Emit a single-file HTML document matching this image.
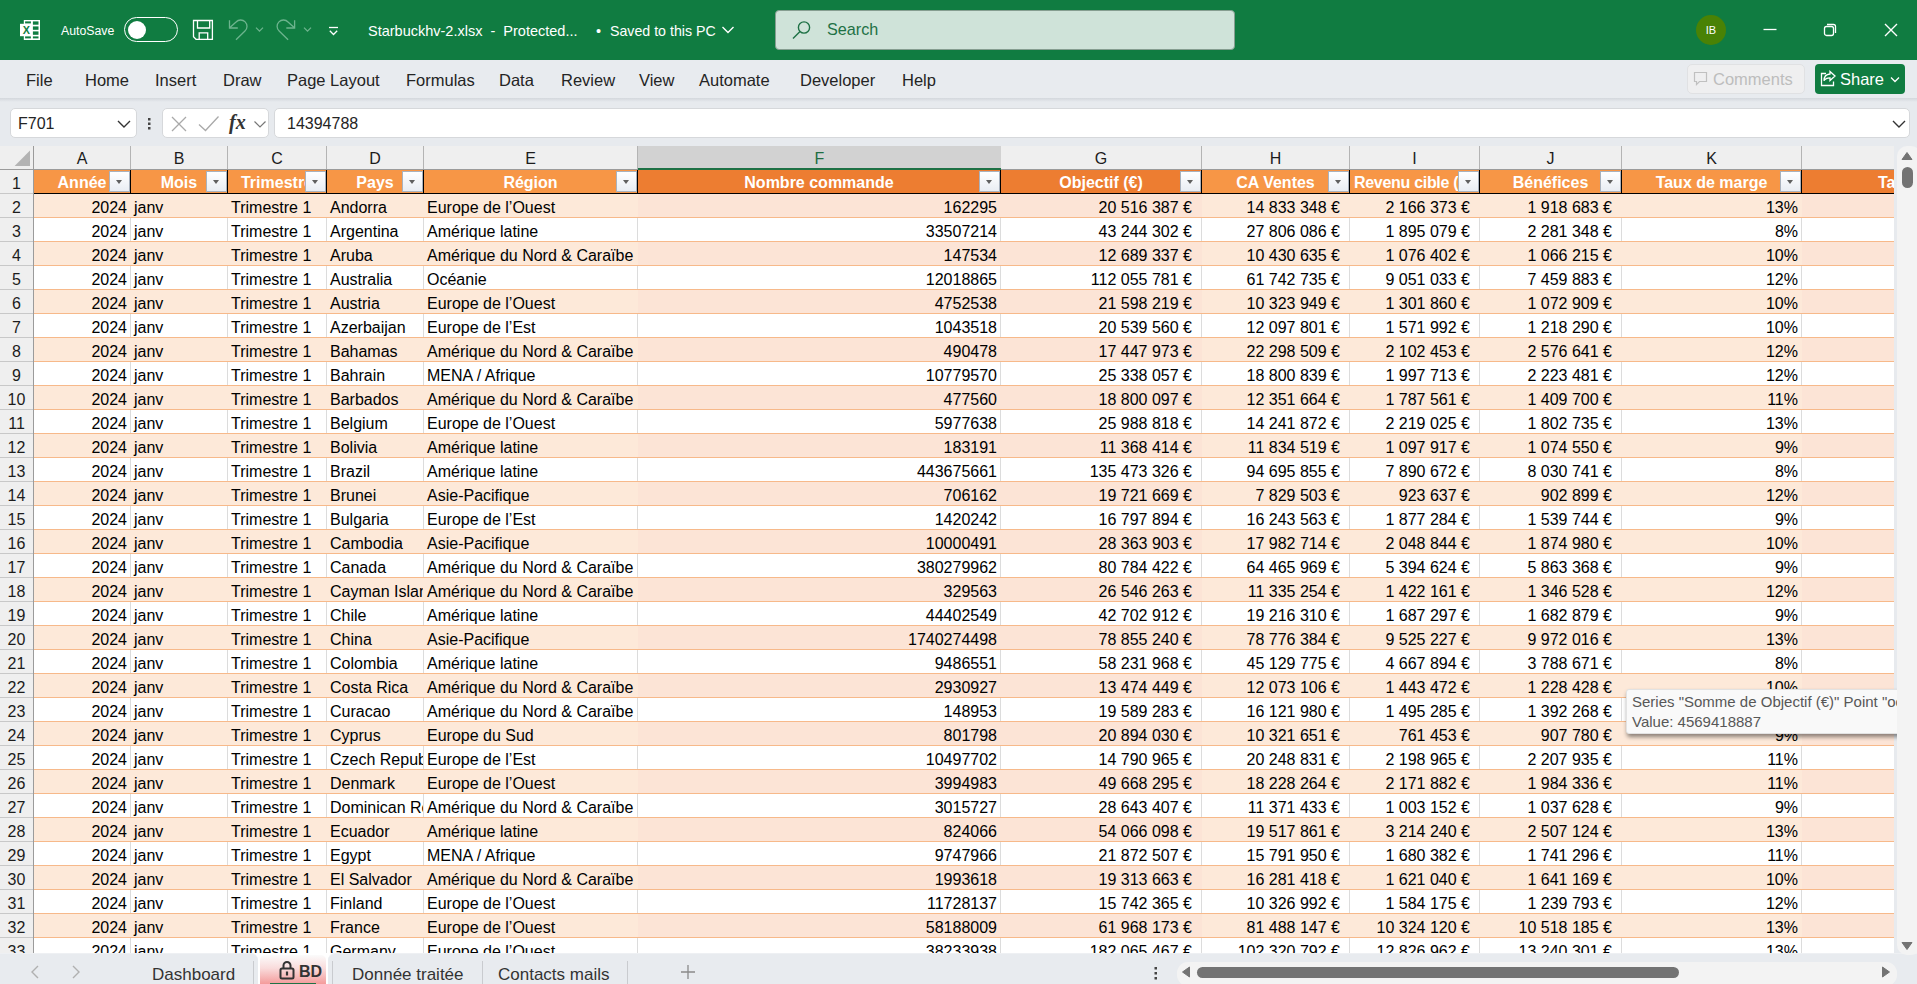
<!DOCTYPE html>
<html lang="fr"><head><meta charset="utf-8"><title>Starbuckhv-2.xlsx - Excel</title>
<style>
*{box-sizing:border-box;margin:0;padding:0}
html,body{width:1917px;height:984px;overflow:hidden}
body{position:relative;background:#E7EAEE;font-family:"Liberation Sans",sans-serif;color:#242424}
.abs{position:absolute}
/* ---------- title bar ---------- */
#title{position:absolute;left:0;top:0;width:1917px;height:60px;background:#107C41;color:#fff}
#title .t{position:absolute;white-space:nowrap;font-size:14.5px;line-height:20px;top:20.5px}
#toggle{position:absolute;left:124px;top:17px;width:54px;height:25px;border:1px solid #fff;border-radius:13px}
#toggle i{position:absolute;left:3px;top:3px;width:18px;height:18px;border-radius:9px;background:#fff}
#search{position:absolute;left:775px;top:10px;width:460px;height:40px;background:#CFE3D9;border:1px solid #869E91;border-radius:4px}
#search span{position:absolute;left:51px;top:7px;font-size:16.2px;line-height:22px;color:#1E7145}
#avatar{position:absolute;left:1696px;top:15px;width:30px;height:30px;border-radius:15px;background:#498205;color:#fff;font-size:11px;line-height:30px;text-align:center}
/* ---------- ribbon tabs ---------- */
#tabs{position:absolute;left:0;top:60px;width:1917px;height:38px;background:#E8EBEF}
#tabs .m{position:absolute;top:9px;font-size:16.5px;line-height:22px;white-space:nowrap;color:#242424}
#tabshadow{position:absolute;left:0;top:98px;width:1917px;height:4px;background:linear-gradient(#D3D7DC,#E7EAEE)}
#comments{position:absolute;left:1687px;top:64px;width:118px;height:30px;border:1px solid #E0E1E3;border-radius:5px;background:#EFEFF0;color:#BDBDBD;font-size:16.5px;line-height:28px}
#share{position:absolute;left:1815px;top:64px;width:90px;height:30px;border-radius:4px;background:#107C41;color:#fff;font-size:16.5px;line-height:30px}
/* ---------- formula bar ---------- */
.box{position:absolute;top:108px;height:30px;background:#fff;border:1px solid #D6D8DB;border-radius:5px}
/* ---------- grid ---------- */
#colhdr{position:absolute;left:0;top:146px;width:1894px;height:24px;background:#EFEFEF;border-bottom:1px solid #9B9B9B}
#colhdr .corner{position:absolute;left:0;top:0;width:34px;height:24px;border-right:1px solid #9B9B9B}
.ch{position:absolute;top:0;height:23px;border-right:1px solid #B4B4B4;text-align:center;font-size:16px;line-height:26px;color:#1c1c1c}
.ch.sel{background:#D2D2D2;color:#1E6E42;border-bottom:2px solid #1E7145;border-right:none;height:24px}
#rowhdr{position:absolute;left:0;top:170px;width:34px;height:783px;overflow:hidden;background:#EFEFEF;border-right:1px solid #9B9B9B}
.rh{position:absolute;left:0;width:33px;height:24px;border-bottom:1px solid #C8C8C8;text-align:center;font-size:16px;line-height:27px;color:#1c1c1c}
#grid{position:absolute;left:34px;top:170px;width:1860px;height:783px;overflow:hidden;background:#fff}
.row{position:absolute;left:0;width:1861px;height:24px;border-bottom:1px solid #F7B98A}
.row.hrow{border-bottom:1px solid #000}
.c{position:absolute;top:0;height:23px;font-size:16px;line-height:27px;white-space:nowrap;overflow:hidden;padding:0 3px 0 3px;border-right:1px solid #DCDCDC;color:#000}
.band .c{border-right-color:transparent}
.c.r{text-align:right;padding-right:3px}
.c.cur{text-align:right;padding-right:9px}
.hc{position:absolute;top:0;height:23px;border-right:1px solid #000;overflow:hidden}
.ht{position:absolute;left:0;right:0;top:0;text-align:center;font-weight:bold;font-size:16px;line-height:26px;color:#fff;white-space:nowrap}
.fb{position:absolute;right:0;top:1px;width:21px;height:21px;border:1px solid #A9B2BE;background:linear-gradient(#fff,#E9EDF3);}
.fb:after{content:"";position:absolute;left:6px;top:8px;border-left:3.5px solid transparent;border-right:3.5px solid transparent;border-top:4px solid #5F5F5F}
/* ---------- scrollbars / bottom ---------- */
#vscroll{position:absolute;left:1894px;top:146px;width:23px;height:809px;z-index:2}
#vtrack{position:absolute;left:3px;top:0;width:24px;height:809px;background:#F3F3F3;border-radius:10px}
#bottom{position:absolute;left:0;top:953px;width:1917px;height:31px;background:#fff}
#bottom .pn{position:absolute;top:0;height:31px;background:#E8EBEF;border-top:1px solid #EEF0F3}
#bottom .s{position:absolute;top:10px;font-size:17px;line-height:24px;color:#333;white-space:nowrap}
#tip{position:absolute;left:1626px;top:689px;width:300px;height:45px;background:#F9F9F9;border:1px solid #E2E2E2;border-radius:3px;box-shadow:1px 3px 4px rgba(0,0,0,.45);color:#575757;font-size:15px;line-height:20px;padding:2px 0 0 5px;white-space:nowrap}
</style></head><body>

<!-- title bar -->
<div id="title">
<svg class="abs" style="left:0;top:0" width="360" height="60" viewBox="0 0 360 60">
<rect x="23.800" y="20" width="16.200" height="20" fill="#fff"/><rect x="20" y="23.800" width="12" height="12.400" fill="#fff"/>
<g fill="#107C41"><rect x="32.900" y="21.400" width="5.600" height="3.300"/><rect x="32.900" y="26.400" width="5.600" height="3.400"/><rect x="32.900" y="31.400" width="5.600" height="3.400"/><rect x="32.900" y="36.400" width="5.600" height="2"/><rect x="25.100" y="21.400" width="5.800" height="2"/><rect x="25.100" y="36.400" width="5.800" height="2"/></g>
<text x="26.300" y="33.900" font-family="Liberation Sans, sans-serif" font-weight="bold" font-size="10.800" text-anchor="middle" fill="#107C41">X</text>
<g fill="none" stroke="#fff" stroke-width="1.300"><path d="M193.500 20.500H212.400V39.300H196L193.500 36.800Z"/><path d="M197.500 20.500V28H209.700V20.500M199.200 39.300V32.900H207.700V39.300"/></g>
<g fill="none" stroke="#6DB48E" stroke-width="1.300"><path d="M229.500 20.200V28H237.800"/><path d="M229.700 27.800L236.050 22.050A6.300 6.300 0 1 1 244.950 30.950L236 39.700"/><path d="M256 27.600L259.500 31.100L263 27.600"/>
<path d="M294.600 20.200V28H286.300"/><path d="M294.400 27.800L288.050 22.050A6.300 6.300 0 1 0 279.150 30.950L288.100 39.700"/><path d="M304 27.600L307.500 31.100L311 27.600"/></g>
<g fill="none" stroke="#fff" stroke-width="1.300"><path d="M329 27.500H338"/><path d="M329.800 30.800L333.500 34.500L337.200 30.800"/></g>
</svg>
<span class="t" style="left:61px;font-size:12.3px">AutoSave</span>
<div id="toggle"><i></i></div>
<span class="t" style="left:368px">Starbuckhv-2.xlsx&nbsp; -&nbsp; Protected...</span>
<span class="t" style="left:596px">•</span><span class="t" style="left:610px;font-size:14.2px">Saved to this PC</span>
<svg class="abs" style="left:721px;top:25px" width="14" height="10" viewBox="0 0 14 10" fill="none" stroke="#fff" stroke-width="1.4"><path d="M1.500 2l5.500 5.500 5.500-5.500"/></svg>
<div id="search"><svg class="abs" style="left:13.500px;top:8px" width="24" height="24" viewBox="0 0 24 24" fill="none" stroke="#1E7145" stroke-width="1.4"><circle cx="14" cy="8.500" r="5.600"/><path d="M10 12.500l-7 7"/></svg><span>Search</span></div>
<div id="avatar">IB</div>
<svg class="abs" style="left:1762px;top:22px" width="16" height="16" viewBox="0 0 16 16" stroke="#fff" stroke-width="1.3"><path d="M1.500 7.500h13"/></svg>
<svg class="abs" style="left:1822px;top:22px" width="16" height="16" viewBox="0 0 16 16" fill="none" stroke="#fff" stroke-width="1.3"><rect x="2.500" y="4.500" width="9" height="9" rx="2"/><path d="M5 2.500h6.500a2 2 0 0 1 2 2v6.500"/></svg>
<svg class="abs" style="left:1883px;top:22px" width="16" height="16" viewBox="0 0 16 16" stroke="#fff" stroke-width="1.4"><path d="M2 2l12 12M14 2l-12 12"/></svg>
</div>

<!-- ribbon tabs -->
<div id="tabs">
<span class="m" style="left:26px">File</span>
<span class="m" style="left:85px">Home</span>
<span class="m" style="left:155px">Insert</span>
<span class="m" style="left:223px">Draw</span>
<span class="m" style="left:287px">Page Layout</span>
<span class="m" style="left:406px">Formulas</span>
<span class="m" style="left:499px">Data</span>
<span class="m" style="left:561px">Review</span>
<span class="m" style="left:639px">View</span>
<span class="m" style="left:699px">Automate</span>
<span class="m" style="left:800px">Developer</span>
<span class="m" style="left:902px">Help</span>
</div>
<div id="tabshadow"></div>
<div id="comments"><svg class="abs" style="left:5px;top:6px" width="16" height="16" viewBox="0 0 16 16" fill="none" stroke="#C0C0C0" stroke-width="1.200"><path d="M1.500 1.500h12v9h-7l-3 3v-3h-2z"/></svg><span class="abs" style="left:25px;top:0">Comments</span></div>
<div id="share"><svg class="abs" style="left:4px;top:6px" width="18" height="18" viewBox="0 0 18 18" fill="none" stroke="#fff" stroke-width="1.300"><path d="M7 3.500h-4.500v12h12v-4"/><path d="M11 1.500l5 4.500-5 4.500v-2.700c-3 0-5 1-6 3 0-4 2-6.500 6-6.800z"/></svg><span class="abs" style="left:25px;top:0">Share</span><svg class="abs" style="left:74px;top:11px" width="12" height="9" viewBox="0 0 12 9" fill="none" stroke="#fff" stroke-width="1.300"><path d="M2 2.500l4 4 4-4"/></svg></div>

<!-- formula bar -->
<div class="box" style="left:10px;width:127px"><span class="abs" style="left:7px;top:4px;font-size:16px;line-height:22px">F701</span><svg class="abs" style="left:105px;top:10px" width="16" height="10" viewBox="0 0 16 10" fill="none" stroke="#333" stroke-width="1.400"><path d="M2 2l6 6 6-6"/></svg></div>
<svg class="abs" style="left:146px;top:116px" width="6" height="16" viewBox="0 0 6 16" fill="#444"><rect x="2" y="2" width="2.500" height="2.500"/><rect x="2" y="6.500" width="2.500" height="2.500"/><rect x="2" y="11" width="2.500" height="2.500"/></svg>
<div class="box" style="left:162px;width:107px">
<svg class="abs" style="left:7px;top:6px" width="18" height="18" viewBox="0 0 18 18" fill="none" stroke="#A9A9A9" stroke-width="1.300"><path d="M2 2l14 14M16 2l-14 14"/></svg>
<svg class="abs" style="left:35px;top:6px" width="22" height="18" viewBox="0 0 22 18" fill="none" stroke="#A9A9A9" stroke-width="1.300"><path d="M1 9.500l6.500 6 13-14"/></svg>
<span class="abs" style="left:66px;top:1px;font-family:'Liberation Serif',serif;font-style:italic;font-weight:bold;font-size:20px;line-height:24px;color:#333">fx</span>
<svg class="abs" style="left:90px;top:11px" width="14" height="9" viewBox="0 0 14 9" fill="none" stroke="#777" stroke-width="1.200"><path d="M1.500 1.500l5.500 5.500 5.500-5.500"/></svg>
</div>
<div class="box" style="left:274px;width:1636px"><span class="abs" style="left:12px;top:4px;font-size:16px;line-height:22px">14394788</span><svg class="abs" style="left:1616px;top:10px" width="16" height="10" viewBox="0 0 16 10" fill="none" stroke="#333" stroke-width="1.400"><path d="M2 2l6 6 6-6"/></svg></div>

<div id="colhdr">
<div class="corner"><svg width="34" height="24" viewBox="0 0 34 24"><path d="M30 4.500V20H14.600Z" fill="#B3B3B3"/></svg></div>
<div class="ch" style="left:34px;width:97px">A</div>
<div class="ch" style="left:131px;width:97px">B</div>
<div class="ch" style="left:228px;width:99px">C</div>
<div class="ch" style="left:327px;width:97px">D</div>
<div class="ch" style="left:424px;width:214px">E</div>
<div class="ch sel" style="left:638px;width:363px">F</div>
<div class="ch" style="left:1001px;width:201px">G</div>
<div class="ch" style="left:1202px;width:148px">H</div>
<div class="ch" style="left:1350px;width:130px">I</div>
<div class="ch" style="left:1480px;width:142px">J</div>
<div class="ch" style="left:1622px;width:180px">K</div>
<div class="ch" style="left:1802px;width:92px;border-right:none"></div>
</div>
<div id="rowhdr">
<div class="rh" style="top:0px">1</div>
<div class="rh" style="top:24px">2</div>
<div class="rh" style="top:48px">3</div>
<div class="rh" style="top:72px">4</div>
<div class="rh" style="top:96px">5</div>
<div class="rh" style="top:120px">6</div>
<div class="rh" style="top:144px">7</div>
<div class="rh" style="top:168px">8</div>
<div class="rh" style="top:192px">9</div>
<div class="rh" style="top:216px">10</div>
<div class="rh" style="top:240px">11</div>
<div class="rh" style="top:264px">12</div>
<div class="rh" style="top:288px">13</div>
<div class="rh" style="top:312px">14</div>
<div class="rh" style="top:336px">15</div>
<div class="rh" style="top:360px">16</div>
<div class="rh" style="top:384px">17</div>
<div class="rh" style="top:408px">18</div>
<div class="rh" style="top:432px">19</div>
<div class="rh" style="top:456px">20</div>
<div class="rh" style="top:480px">21</div>
<div class="rh" style="top:504px">22</div>
<div class="rh" style="top:528px">23</div>
<div class="rh" style="top:552px">24</div>
<div class="rh" style="top:576px">25</div>
<div class="rh" style="top:600px">26</div>
<div class="rh" style="top:624px">27</div>
<div class="rh" style="top:648px">28</div>
<div class="rh" style="top:672px">29</div>
<div class="rh" style="top:696px">30</div>
<div class="rh" style="top:720px">31</div>
<div class="rh" style="top:744px">32</div>
<div class="rh" style="top:768px">33</div>
</div>
<div id="grid">
<div class="row hrow" style="top:0">
<div class="hc" style="left:0px;width:97px;background:#F79646"><span class="ht">Année</span><span class="fb"></span></div>
<div class="hc" style="left:97px;width:97px;background:#F79646"><span class="ht">Mois</span><span class="fb"></span></div>
<div class="hc" style="left:194px;width:99px;background:#F79646"><span class="ht">Trimestre</span><span class="fb"></span></div>
<div class="hc" style="left:293px;width:97px;background:#F79646"><span class="ht">Pays</span><span class="fb"></span></div>
<div class="hc" style="left:390px;width:214px;background:#F79646"><span class="ht">Région</span><span class="fb"></span></div>
<div class="hc" style="left:604px;width:363px;background:#ED7D31"><span class="ht">Nombre commande</span><span class="fb"></span></div>
<div class="hc" style="left:967px;width:201px;background:#ED7D31"><span class="ht">Objectif (€)</span><span class="fb"></span></div>
<div class="hc" style="left:1168px;width:148px;background:#F79646"><span class="ht">CA Ventes</span><span class="fb"></span></div>
<div class="hc" style="left:1316px;width:130px;background:#F79646"><span class="ht" style="text-align:left;left:4px;letter-spacing:-.3px">Revenu cible (€)</span><span class="fb"></span></div>
<div class="hc" style="left:1446px;width:142px;background:#F79646"><span class="ht">Bénéfices</span><span class="fb"></span></div>
<div class="hc" style="left:1588px;width:180px;background:#F79646"><span class="ht">Taux de marge</span><span class="fb"></span></div>
<div class="hc" style="left:1768px;width:93px;background:#ED7D31;border-right:none"><span class="ht" style="left:76px;right:auto;text-align:left;width:60px">Taux</span></div>
</div>
<div class="row band" style="top:24px">
<div class="c r" style="left:0px;width:97px;background:#FDE9D9;">2024</div>
<div class="c" style="left:97px;width:97px;background:#FDE9D9;">janv</div>
<div class="c" style="left:194px;width:99px;background:#FDE9D9;">Trimestre 1</div>
<div class="c" style="left:293px;width:97px;background:#FDE9D9;">Andorra</div>
<div class="c" style="left:390px;width:214px;background:#FDE9D9;">Europe de l’Ouest</div>
<div class="c r" style="left:604px;width:363px;background:#FCE4D6;">162295</div>
<div class="c cur" style="left:967px;width:201px;background:#FCE4D6;">20 516 387 €</div>
<div class="c cur" style="left:1168px;width:148px;background:#FDE9D9;">14 833 348 €</div>
<div class="c cur" style="left:1316px;width:130px;background:#FDE9D9;">2 166 373 €</div>
<div class="c cur" style="left:1446px;width:142px;background:#FDE9D9;">1 918 683 €</div>
<div class="c r" style="left:1588px;width:180px;background:#FDE9D9;">13%</div>
<div class="c" style="left:1768px;width:93px;border-right:none;background:#FCE4D6;"></div>
</div>
<div class="row plain" style="top:48px">
<div class="c r" style="left:0px;width:97px;">2024</div>
<div class="c" style="left:97px;width:97px;">janv</div>
<div class="c" style="left:194px;width:99px;">Trimestre 1</div>
<div class="c" style="left:293px;width:97px;">Argentina</div>
<div class="c" style="left:390px;width:214px;">Amérique latine</div>
<div class="c r" style="left:604px;width:363px;">33507214</div>
<div class="c cur" style="left:967px;width:201px;">43 244 302 €</div>
<div class="c cur" style="left:1168px;width:148px;">27 806 086 €</div>
<div class="c cur" style="left:1316px;width:130px;">1 895 079 €</div>
<div class="c cur" style="left:1446px;width:142px;">2 281 348 €</div>
<div class="c r" style="left:1588px;width:180px;">8%</div>
<div class="c" style="left:1768px;width:93px;border-right:none;"></div>
</div>
<div class="row band" style="top:72px">
<div class="c r" style="left:0px;width:97px;background:#FDE9D9;">2024</div>
<div class="c" style="left:97px;width:97px;background:#FDE9D9;">janv</div>
<div class="c" style="left:194px;width:99px;background:#FDE9D9;">Trimestre 1</div>
<div class="c" style="left:293px;width:97px;background:#FDE9D9;">Aruba</div>
<div class="c" style="left:390px;width:214px;background:#FDE9D9;">Amérique du Nord &amp; Caraïbe</div>
<div class="c r" style="left:604px;width:363px;background:#FCE4D6;">147534</div>
<div class="c cur" style="left:967px;width:201px;background:#FCE4D6;">12 689 337 €</div>
<div class="c cur" style="left:1168px;width:148px;background:#FDE9D9;">10 430 635 €</div>
<div class="c cur" style="left:1316px;width:130px;background:#FDE9D9;">1 076 402 €</div>
<div class="c cur" style="left:1446px;width:142px;background:#FDE9D9;">1 066 215 €</div>
<div class="c r" style="left:1588px;width:180px;background:#FDE9D9;">10%</div>
<div class="c" style="left:1768px;width:93px;border-right:none;background:#FCE4D6;"></div>
</div>
<div class="row plain" style="top:96px">
<div class="c r" style="left:0px;width:97px;">2024</div>
<div class="c" style="left:97px;width:97px;">janv</div>
<div class="c" style="left:194px;width:99px;">Trimestre 1</div>
<div class="c" style="left:293px;width:97px;">Australia</div>
<div class="c" style="left:390px;width:214px;">Océanie</div>
<div class="c r" style="left:604px;width:363px;">12018865</div>
<div class="c cur" style="left:967px;width:201px;">112 055 781 €</div>
<div class="c cur" style="left:1168px;width:148px;">61 742 735 €</div>
<div class="c cur" style="left:1316px;width:130px;">9 051 033 €</div>
<div class="c cur" style="left:1446px;width:142px;">7 459 883 €</div>
<div class="c r" style="left:1588px;width:180px;">12%</div>
<div class="c" style="left:1768px;width:93px;border-right:none;"></div>
</div>
<div class="row band" style="top:120px">
<div class="c r" style="left:0px;width:97px;background:#FDE9D9;">2024</div>
<div class="c" style="left:97px;width:97px;background:#FDE9D9;">janv</div>
<div class="c" style="left:194px;width:99px;background:#FDE9D9;">Trimestre 1</div>
<div class="c" style="left:293px;width:97px;background:#FDE9D9;">Austria</div>
<div class="c" style="left:390px;width:214px;background:#FDE9D9;">Europe de l’Ouest</div>
<div class="c r" style="left:604px;width:363px;background:#FCE4D6;">4752538</div>
<div class="c cur" style="left:967px;width:201px;background:#FCE4D6;">21 598 219 €</div>
<div class="c cur" style="left:1168px;width:148px;background:#FDE9D9;">10 323 949 €</div>
<div class="c cur" style="left:1316px;width:130px;background:#FDE9D9;">1 301 860 €</div>
<div class="c cur" style="left:1446px;width:142px;background:#FDE9D9;">1 072 909 €</div>
<div class="c r" style="left:1588px;width:180px;background:#FDE9D9;">10%</div>
<div class="c" style="left:1768px;width:93px;border-right:none;background:#FCE4D6;"></div>
</div>
<div class="row plain" style="top:144px">
<div class="c r" style="left:0px;width:97px;">2024</div>
<div class="c" style="left:97px;width:97px;">janv</div>
<div class="c" style="left:194px;width:99px;">Trimestre 1</div>
<div class="c" style="left:293px;width:97px;">Azerbaijan</div>
<div class="c" style="left:390px;width:214px;">Europe de l’Est</div>
<div class="c r" style="left:604px;width:363px;">1043518</div>
<div class="c cur" style="left:967px;width:201px;">20 539 560 €</div>
<div class="c cur" style="left:1168px;width:148px;">12 097 801 €</div>
<div class="c cur" style="left:1316px;width:130px;">1 571 992 €</div>
<div class="c cur" style="left:1446px;width:142px;">1 218 290 €</div>
<div class="c r" style="left:1588px;width:180px;">10%</div>
<div class="c" style="left:1768px;width:93px;border-right:none;"></div>
</div>
<div class="row band" style="top:168px">
<div class="c r" style="left:0px;width:97px;background:#FDE9D9;">2024</div>
<div class="c" style="left:97px;width:97px;background:#FDE9D9;">janv</div>
<div class="c" style="left:194px;width:99px;background:#FDE9D9;">Trimestre 1</div>
<div class="c" style="left:293px;width:97px;background:#FDE9D9;">Bahamas</div>
<div class="c" style="left:390px;width:214px;background:#FDE9D9;">Amérique du Nord &amp; Caraïbe</div>
<div class="c r" style="left:604px;width:363px;background:#FCE4D6;">490478</div>
<div class="c cur" style="left:967px;width:201px;background:#FCE4D6;">17 447 973 €</div>
<div class="c cur" style="left:1168px;width:148px;background:#FDE9D9;">22 298 509 €</div>
<div class="c cur" style="left:1316px;width:130px;background:#FDE9D9;">2 102 453 €</div>
<div class="c cur" style="left:1446px;width:142px;background:#FDE9D9;">2 576 641 €</div>
<div class="c r" style="left:1588px;width:180px;background:#FDE9D9;">12%</div>
<div class="c" style="left:1768px;width:93px;border-right:none;background:#FCE4D6;"></div>
</div>
<div class="row plain" style="top:192px">
<div class="c r" style="left:0px;width:97px;">2024</div>
<div class="c" style="left:97px;width:97px;">janv</div>
<div class="c" style="left:194px;width:99px;">Trimestre 1</div>
<div class="c" style="left:293px;width:97px;">Bahrain</div>
<div class="c" style="left:390px;width:214px;">MENA / Afrique</div>
<div class="c r" style="left:604px;width:363px;">10779570</div>
<div class="c cur" style="left:967px;width:201px;">25 338 057 €</div>
<div class="c cur" style="left:1168px;width:148px;">18 800 839 €</div>
<div class="c cur" style="left:1316px;width:130px;">1 997 713 €</div>
<div class="c cur" style="left:1446px;width:142px;">2 223 481 €</div>
<div class="c r" style="left:1588px;width:180px;">12%</div>
<div class="c" style="left:1768px;width:93px;border-right:none;"></div>
</div>
<div class="row band" style="top:216px">
<div class="c r" style="left:0px;width:97px;background:#FDE9D9;">2024</div>
<div class="c" style="left:97px;width:97px;background:#FDE9D9;">janv</div>
<div class="c" style="left:194px;width:99px;background:#FDE9D9;">Trimestre 1</div>
<div class="c" style="left:293px;width:97px;background:#FDE9D9;">Barbados</div>
<div class="c" style="left:390px;width:214px;background:#FDE9D9;">Amérique du Nord &amp; Caraïbe</div>
<div class="c r" style="left:604px;width:363px;background:#FCE4D6;">477560</div>
<div class="c cur" style="left:967px;width:201px;background:#FCE4D6;">18 800 097 €</div>
<div class="c cur" style="left:1168px;width:148px;background:#FDE9D9;">12 351 664 €</div>
<div class="c cur" style="left:1316px;width:130px;background:#FDE9D9;">1 787 561 €</div>
<div class="c cur" style="left:1446px;width:142px;background:#FDE9D9;">1 409 700 €</div>
<div class="c r" style="left:1588px;width:180px;background:#FDE9D9;">11%</div>
<div class="c" style="left:1768px;width:93px;border-right:none;background:#FCE4D6;"></div>
</div>
<div class="row plain" style="top:240px">
<div class="c r" style="left:0px;width:97px;">2024</div>
<div class="c" style="left:97px;width:97px;">janv</div>
<div class="c" style="left:194px;width:99px;">Trimestre 1</div>
<div class="c" style="left:293px;width:97px;">Belgium</div>
<div class="c" style="left:390px;width:214px;">Europe de l’Ouest</div>
<div class="c r" style="left:604px;width:363px;">5977638</div>
<div class="c cur" style="left:967px;width:201px;">25 988 818 €</div>
<div class="c cur" style="left:1168px;width:148px;">14 241 872 €</div>
<div class="c cur" style="left:1316px;width:130px;">2 219 025 €</div>
<div class="c cur" style="left:1446px;width:142px;">1 802 735 €</div>
<div class="c r" style="left:1588px;width:180px;">13%</div>
<div class="c" style="left:1768px;width:93px;border-right:none;"></div>
</div>
<div class="row band" style="top:264px">
<div class="c r" style="left:0px;width:97px;background:#FDE9D9;">2024</div>
<div class="c" style="left:97px;width:97px;background:#FDE9D9;">janv</div>
<div class="c" style="left:194px;width:99px;background:#FDE9D9;">Trimestre 1</div>
<div class="c" style="left:293px;width:97px;background:#FDE9D9;">Bolivia</div>
<div class="c" style="left:390px;width:214px;background:#FDE9D9;">Amérique latine</div>
<div class="c r" style="left:604px;width:363px;background:#FCE4D6;">183191</div>
<div class="c cur" style="left:967px;width:201px;background:#FCE4D6;">11 368 414 €</div>
<div class="c cur" style="left:1168px;width:148px;background:#FDE9D9;">11 834 519 €</div>
<div class="c cur" style="left:1316px;width:130px;background:#FDE9D9;">1 097 917 €</div>
<div class="c cur" style="left:1446px;width:142px;background:#FDE9D9;">1 074 550 €</div>
<div class="c r" style="left:1588px;width:180px;background:#FDE9D9;">9%</div>
<div class="c" style="left:1768px;width:93px;border-right:none;background:#FCE4D6;"></div>
</div>
<div class="row plain" style="top:288px">
<div class="c r" style="left:0px;width:97px;">2024</div>
<div class="c" style="left:97px;width:97px;">janv</div>
<div class="c" style="left:194px;width:99px;">Trimestre 1</div>
<div class="c" style="left:293px;width:97px;">Brazil</div>
<div class="c" style="left:390px;width:214px;">Amérique latine</div>
<div class="c r" style="left:604px;width:363px;">443675661</div>
<div class="c cur" style="left:967px;width:201px;">135 473 326 €</div>
<div class="c cur" style="left:1168px;width:148px;">94 695 855 €</div>
<div class="c cur" style="left:1316px;width:130px;">7 890 672 €</div>
<div class="c cur" style="left:1446px;width:142px;">8 030 741 €</div>
<div class="c r" style="left:1588px;width:180px;">8%</div>
<div class="c" style="left:1768px;width:93px;border-right:none;"></div>
</div>
<div class="row band" style="top:312px">
<div class="c r" style="left:0px;width:97px;background:#FDE9D9;">2024</div>
<div class="c" style="left:97px;width:97px;background:#FDE9D9;">janv</div>
<div class="c" style="left:194px;width:99px;background:#FDE9D9;">Trimestre 1</div>
<div class="c" style="left:293px;width:97px;background:#FDE9D9;">Brunei</div>
<div class="c" style="left:390px;width:214px;background:#FDE9D9;">Asie-Pacifique</div>
<div class="c r" style="left:604px;width:363px;background:#FCE4D6;">706162</div>
<div class="c cur" style="left:967px;width:201px;background:#FCE4D6;">19 721 669 €</div>
<div class="c cur" style="left:1168px;width:148px;background:#FDE9D9;">7 829 503 €</div>
<div class="c cur" style="left:1316px;width:130px;background:#FDE9D9;">923 637 €</div>
<div class="c cur" style="left:1446px;width:142px;background:#FDE9D9;">902 899 €</div>
<div class="c r" style="left:1588px;width:180px;background:#FDE9D9;">12%</div>
<div class="c" style="left:1768px;width:93px;border-right:none;background:#FCE4D6;"></div>
</div>
<div class="row plain" style="top:336px">
<div class="c r" style="left:0px;width:97px;">2024</div>
<div class="c" style="left:97px;width:97px;">janv</div>
<div class="c" style="left:194px;width:99px;">Trimestre 1</div>
<div class="c" style="left:293px;width:97px;">Bulgaria</div>
<div class="c" style="left:390px;width:214px;">Europe de l’Est</div>
<div class="c r" style="left:604px;width:363px;">1420242</div>
<div class="c cur" style="left:967px;width:201px;">16 797 894 €</div>
<div class="c cur" style="left:1168px;width:148px;">16 243 563 €</div>
<div class="c cur" style="left:1316px;width:130px;">1 877 284 €</div>
<div class="c cur" style="left:1446px;width:142px;">1 539 744 €</div>
<div class="c r" style="left:1588px;width:180px;">9%</div>
<div class="c" style="left:1768px;width:93px;border-right:none;"></div>
</div>
<div class="row band" style="top:360px">
<div class="c r" style="left:0px;width:97px;background:#FDE9D9;">2024</div>
<div class="c" style="left:97px;width:97px;background:#FDE9D9;">janv</div>
<div class="c" style="left:194px;width:99px;background:#FDE9D9;">Trimestre 1</div>
<div class="c" style="left:293px;width:97px;background:#FDE9D9;">Cambodia</div>
<div class="c" style="left:390px;width:214px;background:#FDE9D9;">Asie-Pacifique</div>
<div class="c r" style="left:604px;width:363px;background:#FCE4D6;">10000491</div>
<div class="c cur" style="left:967px;width:201px;background:#FCE4D6;">28 363 903 €</div>
<div class="c cur" style="left:1168px;width:148px;background:#FDE9D9;">17 982 714 €</div>
<div class="c cur" style="left:1316px;width:130px;background:#FDE9D9;">2 048 844 €</div>
<div class="c cur" style="left:1446px;width:142px;background:#FDE9D9;">1 874 980 €</div>
<div class="c r" style="left:1588px;width:180px;background:#FDE9D9;">10%</div>
<div class="c" style="left:1768px;width:93px;border-right:none;background:#FCE4D6;"></div>
</div>
<div class="row plain" style="top:384px">
<div class="c r" style="left:0px;width:97px;">2024</div>
<div class="c" style="left:97px;width:97px;">janv</div>
<div class="c" style="left:194px;width:99px;">Trimestre 1</div>
<div class="c" style="left:293px;width:97px;">Canada</div>
<div class="c" style="left:390px;width:214px;">Amérique du Nord &amp; Caraïbe</div>
<div class="c r" style="left:604px;width:363px;">380279962</div>
<div class="c cur" style="left:967px;width:201px;">80 784 422 €</div>
<div class="c cur" style="left:1168px;width:148px;">64 465 969 €</div>
<div class="c cur" style="left:1316px;width:130px;">5 394 624 €</div>
<div class="c cur" style="left:1446px;width:142px;">5 863 368 €</div>
<div class="c r" style="left:1588px;width:180px;">9%</div>
<div class="c" style="left:1768px;width:93px;border-right:none;"></div>
</div>
<div class="row band" style="top:408px">
<div class="c r" style="left:0px;width:97px;background:#FDE9D9;">2024</div>
<div class="c" style="left:97px;width:97px;background:#FDE9D9;">janv</div>
<div class="c" style="left:194px;width:99px;background:#FDE9D9;">Trimestre 1</div>
<div class="c" style="left:293px;width:97px;background:#FDE9D9;">Cayman Islands</div>
<div class="c" style="left:390px;width:214px;background:#FDE9D9;">Amérique du Nord &amp; Caraïbe</div>
<div class="c r" style="left:604px;width:363px;background:#FCE4D6;">329563</div>
<div class="c cur" style="left:967px;width:201px;background:#FCE4D6;">26 546 263 €</div>
<div class="c cur" style="left:1168px;width:148px;background:#FDE9D9;">11 335 254 €</div>
<div class="c cur" style="left:1316px;width:130px;background:#FDE9D9;">1 422 161 €</div>
<div class="c cur" style="left:1446px;width:142px;background:#FDE9D9;">1 346 528 €</div>
<div class="c r" style="left:1588px;width:180px;background:#FDE9D9;">12%</div>
<div class="c" style="left:1768px;width:93px;border-right:none;background:#FCE4D6;"></div>
</div>
<div class="row plain" style="top:432px">
<div class="c r" style="left:0px;width:97px;">2024</div>
<div class="c" style="left:97px;width:97px;">janv</div>
<div class="c" style="left:194px;width:99px;">Trimestre 1</div>
<div class="c" style="left:293px;width:97px;">Chile</div>
<div class="c" style="left:390px;width:214px;">Amérique latine</div>
<div class="c r" style="left:604px;width:363px;">44402549</div>
<div class="c cur" style="left:967px;width:201px;">42 702 912 €</div>
<div class="c cur" style="left:1168px;width:148px;">19 216 310 €</div>
<div class="c cur" style="left:1316px;width:130px;">1 687 297 €</div>
<div class="c cur" style="left:1446px;width:142px;">1 682 879 €</div>
<div class="c r" style="left:1588px;width:180px;">9%</div>
<div class="c" style="left:1768px;width:93px;border-right:none;"></div>
</div>
<div class="row band" style="top:456px">
<div class="c r" style="left:0px;width:97px;background:#FDE9D9;">2024</div>
<div class="c" style="left:97px;width:97px;background:#FDE9D9;">janv</div>
<div class="c" style="left:194px;width:99px;background:#FDE9D9;">Trimestre 1</div>
<div class="c" style="left:293px;width:97px;background:#FDE9D9;">China</div>
<div class="c" style="left:390px;width:214px;background:#FDE9D9;">Asie-Pacifique</div>
<div class="c r" style="left:604px;width:363px;background:#FCE4D6;">1740274498</div>
<div class="c cur" style="left:967px;width:201px;background:#FCE4D6;">78 855 240 €</div>
<div class="c cur" style="left:1168px;width:148px;background:#FDE9D9;">78 776 384 €</div>
<div class="c cur" style="left:1316px;width:130px;background:#FDE9D9;">9 525 227 €</div>
<div class="c cur" style="left:1446px;width:142px;background:#FDE9D9;">9 972 016 €</div>
<div class="c r" style="left:1588px;width:180px;background:#FDE9D9;">13%</div>
<div class="c" style="left:1768px;width:93px;border-right:none;background:#FCE4D6;"></div>
</div>
<div class="row plain" style="top:480px">
<div class="c r" style="left:0px;width:97px;">2024</div>
<div class="c" style="left:97px;width:97px;">janv</div>
<div class="c" style="left:194px;width:99px;">Trimestre 1</div>
<div class="c" style="left:293px;width:97px;">Colombia</div>
<div class="c" style="left:390px;width:214px;">Amérique latine</div>
<div class="c r" style="left:604px;width:363px;">9486551</div>
<div class="c cur" style="left:967px;width:201px;">58 231 968 €</div>
<div class="c cur" style="left:1168px;width:148px;">45 129 775 €</div>
<div class="c cur" style="left:1316px;width:130px;">4 667 894 €</div>
<div class="c cur" style="left:1446px;width:142px;">3 788 671 €</div>
<div class="c r" style="left:1588px;width:180px;">8%</div>
<div class="c" style="left:1768px;width:93px;border-right:none;"></div>
</div>
<div class="row band" style="top:504px">
<div class="c r" style="left:0px;width:97px;background:#FDE9D9;">2024</div>
<div class="c" style="left:97px;width:97px;background:#FDE9D9;">janv</div>
<div class="c" style="left:194px;width:99px;background:#FDE9D9;">Trimestre 1</div>
<div class="c" style="left:293px;width:97px;background:#FDE9D9;">Costa Rica</div>
<div class="c" style="left:390px;width:214px;background:#FDE9D9;">Amérique du Nord &amp; Caraïbe</div>
<div class="c r" style="left:604px;width:363px;background:#FCE4D6;">2930927</div>
<div class="c cur" style="left:967px;width:201px;background:#FCE4D6;">13 474 449 €</div>
<div class="c cur" style="left:1168px;width:148px;background:#FDE9D9;">12 073 106 €</div>
<div class="c cur" style="left:1316px;width:130px;background:#FDE9D9;">1 443 472 €</div>
<div class="c cur" style="left:1446px;width:142px;background:#FDE9D9;">1 228 428 €</div>
<div class="c r" style="left:1588px;width:180px;background:#FDE9D9;">10%</div>
<div class="c" style="left:1768px;width:93px;border-right:none;background:#FCE4D6;"></div>
</div>
<div class="row plain" style="top:528px">
<div class="c r" style="left:0px;width:97px;">2024</div>
<div class="c" style="left:97px;width:97px;">janv</div>
<div class="c" style="left:194px;width:99px;">Trimestre 1</div>
<div class="c" style="left:293px;width:97px;">Curacao</div>
<div class="c" style="left:390px;width:214px;">Amérique du Nord &amp; Caraïbe</div>
<div class="c r" style="left:604px;width:363px;">148953</div>
<div class="c cur" style="left:967px;width:201px;">19 589 283 €</div>
<div class="c cur" style="left:1168px;width:148px;">16 121 980 €</div>
<div class="c cur" style="left:1316px;width:130px;">1 495 285 €</div>
<div class="c cur" style="left:1446px;width:142px;">1 392 268 €</div>
<div class="c r" style="left:1588px;width:180px;">9%</div>
<div class="c" style="left:1768px;width:93px;border-right:none;"></div>
</div>
<div class="row band" style="top:552px">
<div class="c r" style="left:0px;width:97px;background:#FDE9D9;">2024</div>
<div class="c" style="left:97px;width:97px;background:#FDE9D9;">janv</div>
<div class="c" style="left:194px;width:99px;background:#FDE9D9;">Trimestre 1</div>
<div class="c" style="left:293px;width:97px;background:#FDE9D9;">Cyprus</div>
<div class="c" style="left:390px;width:214px;background:#FDE9D9;">Europe du Sud</div>
<div class="c r" style="left:604px;width:363px;background:#FCE4D6;">801798</div>
<div class="c cur" style="left:967px;width:201px;background:#FCE4D6;">20 894 030 €</div>
<div class="c cur" style="left:1168px;width:148px;background:#FDE9D9;">10 321 651 €</div>
<div class="c cur" style="left:1316px;width:130px;background:#FDE9D9;">761 453 €</div>
<div class="c cur" style="left:1446px;width:142px;background:#FDE9D9;">907 780 €</div>
<div class="c r" style="left:1588px;width:180px;background:#FDE9D9;">9%</div>
<div class="c" style="left:1768px;width:93px;border-right:none;background:#FCE4D6;"></div>
</div>
<div class="row plain" style="top:576px">
<div class="c r" style="left:0px;width:97px;">2024</div>
<div class="c" style="left:97px;width:97px;">janv</div>
<div class="c" style="left:194px;width:99px;">Trimestre 1</div>
<div class="c" style="left:293px;width:97px;">Czech Republic</div>
<div class="c" style="left:390px;width:214px;">Europe de l’Est</div>
<div class="c r" style="left:604px;width:363px;">10497702</div>
<div class="c cur" style="left:967px;width:201px;">14 790 965 €</div>
<div class="c cur" style="left:1168px;width:148px;">20 248 831 €</div>
<div class="c cur" style="left:1316px;width:130px;">2 198 965 €</div>
<div class="c cur" style="left:1446px;width:142px;">2 207 935 €</div>
<div class="c r" style="left:1588px;width:180px;">11%</div>
<div class="c" style="left:1768px;width:93px;border-right:none;"></div>
</div>
<div class="row band" style="top:600px">
<div class="c r" style="left:0px;width:97px;background:#FDE9D9;">2024</div>
<div class="c" style="left:97px;width:97px;background:#FDE9D9;">janv</div>
<div class="c" style="left:194px;width:99px;background:#FDE9D9;">Trimestre 1</div>
<div class="c" style="left:293px;width:97px;background:#FDE9D9;">Denmark</div>
<div class="c" style="left:390px;width:214px;background:#FDE9D9;">Europe de l’Ouest</div>
<div class="c r" style="left:604px;width:363px;background:#FCE4D6;">3994983</div>
<div class="c cur" style="left:967px;width:201px;background:#FCE4D6;">49 668 295 €</div>
<div class="c cur" style="left:1168px;width:148px;background:#FDE9D9;">18 228 264 €</div>
<div class="c cur" style="left:1316px;width:130px;background:#FDE9D9;">2 171 882 €</div>
<div class="c cur" style="left:1446px;width:142px;background:#FDE9D9;">1 984 336 €</div>
<div class="c r" style="left:1588px;width:180px;background:#FDE9D9;">11%</div>
<div class="c" style="left:1768px;width:93px;border-right:none;background:#FCE4D6;"></div>
</div>
<div class="row plain" style="top:624px">
<div class="c r" style="left:0px;width:97px;">2024</div>
<div class="c" style="left:97px;width:97px;">janv</div>
<div class="c" style="left:194px;width:99px;">Trimestre 1</div>
<div class="c" style="left:293px;width:97px;">Dominican Republic</div>
<div class="c" style="left:390px;width:214px;">Amérique du Nord &amp; Caraïbe</div>
<div class="c r" style="left:604px;width:363px;">3015727</div>
<div class="c cur" style="left:967px;width:201px;">28 643 407 €</div>
<div class="c cur" style="left:1168px;width:148px;">11 371 433 €</div>
<div class="c cur" style="left:1316px;width:130px;">1 003 152 €</div>
<div class="c cur" style="left:1446px;width:142px;">1 037 628 €</div>
<div class="c r" style="left:1588px;width:180px;">9%</div>
<div class="c" style="left:1768px;width:93px;border-right:none;"></div>
</div>
<div class="row band" style="top:648px">
<div class="c r" style="left:0px;width:97px;background:#FDE9D9;">2024</div>
<div class="c" style="left:97px;width:97px;background:#FDE9D9;">janv</div>
<div class="c" style="left:194px;width:99px;background:#FDE9D9;">Trimestre 1</div>
<div class="c" style="left:293px;width:97px;background:#FDE9D9;">Ecuador</div>
<div class="c" style="left:390px;width:214px;background:#FDE9D9;">Amérique latine</div>
<div class="c r" style="left:604px;width:363px;background:#FCE4D6;">824066</div>
<div class="c cur" style="left:967px;width:201px;background:#FCE4D6;">54 066 098 €</div>
<div class="c cur" style="left:1168px;width:148px;background:#FDE9D9;">19 517 861 €</div>
<div class="c cur" style="left:1316px;width:130px;background:#FDE9D9;">3 214 240 €</div>
<div class="c cur" style="left:1446px;width:142px;background:#FDE9D9;">2 507 124 €</div>
<div class="c r" style="left:1588px;width:180px;background:#FDE9D9;">13%</div>
<div class="c" style="left:1768px;width:93px;border-right:none;background:#FCE4D6;"></div>
</div>
<div class="row plain" style="top:672px">
<div class="c r" style="left:0px;width:97px;">2024</div>
<div class="c" style="left:97px;width:97px;">janv</div>
<div class="c" style="left:194px;width:99px;">Trimestre 1</div>
<div class="c" style="left:293px;width:97px;">Egypt</div>
<div class="c" style="left:390px;width:214px;">MENA / Afrique</div>
<div class="c r" style="left:604px;width:363px;">9747966</div>
<div class="c cur" style="left:967px;width:201px;">21 872 507 €</div>
<div class="c cur" style="left:1168px;width:148px;">15 791 950 €</div>
<div class="c cur" style="left:1316px;width:130px;">1 680 382 €</div>
<div class="c cur" style="left:1446px;width:142px;">1 741 296 €</div>
<div class="c r" style="left:1588px;width:180px;">11%</div>
<div class="c" style="left:1768px;width:93px;border-right:none;"></div>
</div>
<div class="row band" style="top:696px">
<div class="c r" style="left:0px;width:97px;background:#FDE9D9;">2024</div>
<div class="c" style="left:97px;width:97px;background:#FDE9D9;">janv</div>
<div class="c" style="left:194px;width:99px;background:#FDE9D9;">Trimestre 1</div>
<div class="c" style="left:293px;width:97px;background:#FDE9D9;">El Salvador</div>
<div class="c" style="left:390px;width:214px;background:#FDE9D9;">Amérique du Nord &amp; Caraïbe</div>
<div class="c r" style="left:604px;width:363px;background:#FCE4D6;">1993618</div>
<div class="c cur" style="left:967px;width:201px;background:#FCE4D6;">19 313 663 €</div>
<div class="c cur" style="left:1168px;width:148px;background:#FDE9D9;">16 281 418 €</div>
<div class="c cur" style="left:1316px;width:130px;background:#FDE9D9;">1 621 040 €</div>
<div class="c cur" style="left:1446px;width:142px;background:#FDE9D9;">1 641 169 €</div>
<div class="c r" style="left:1588px;width:180px;background:#FDE9D9;">10%</div>
<div class="c" style="left:1768px;width:93px;border-right:none;background:#FCE4D6;"></div>
</div>
<div class="row plain" style="top:720px">
<div class="c r" style="left:0px;width:97px;">2024</div>
<div class="c" style="left:97px;width:97px;">janv</div>
<div class="c" style="left:194px;width:99px;">Trimestre 1</div>
<div class="c" style="left:293px;width:97px;">Finland</div>
<div class="c" style="left:390px;width:214px;">Europe de l’Ouest</div>
<div class="c r" style="left:604px;width:363px;">11728137</div>
<div class="c cur" style="left:967px;width:201px;">15 742 365 €</div>
<div class="c cur" style="left:1168px;width:148px;">10 326 992 €</div>
<div class="c cur" style="left:1316px;width:130px;">1 584 175 €</div>
<div class="c cur" style="left:1446px;width:142px;">1 239 793 €</div>
<div class="c r" style="left:1588px;width:180px;">12%</div>
<div class="c" style="left:1768px;width:93px;border-right:none;"></div>
</div>
<div class="row band" style="top:744px">
<div class="c r" style="left:0px;width:97px;background:#FDE9D9;">2024</div>
<div class="c" style="left:97px;width:97px;background:#FDE9D9;">janv</div>
<div class="c" style="left:194px;width:99px;background:#FDE9D9;">Trimestre 1</div>
<div class="c" style="left:293px;width:97px;background:#FDE9D9;">France</div>
<div class="c" style="left:390px;width:214px;background:#FDE9D9;">Europe de l’Ouest</div>
<div class="c r" style="left:604px;width:363px;background:#FCE4D6;">58188009</div>
<div class="c cur" style="left:967px;width:201px;background:#FCE4D6;">61 968 173 €</div>
<div class="c cur" style="left:1168px;width:148px;background:#FDE9D9;">81 488 147 €</div>
<div class="c cur" style="left:1316px;width:130px;background:#FDE9D9;">10 324 120 €</div>
<div class="c cur" style="left:1446px;width:142px;background:#FDE9D9;">10 518 185 €</div>
<div class="c r" style="left:1588px;width:180px;background:#FDE9D9;">13%</div>
<div class="c" style="left:1768px;width:93px;border-right:none;background:#FCE4D6;"></div>
</div>
<div class="row plain" style="top:768px">
<div class="c r" style="left:0px;width:97px;">2024</div>
<div class="c" style="left:97px;width:97px;">janv</div>
<div class="c" style="left:194px;width:99px;">Trimestre 1</div>
<div class="c" style="left:293px;width:97px;">Germany</div>
<div class="c" style="left:390px;width:214px;">Europe de l’Ouest</div>
<div class="c r" style="left:604px;width:363px;">38233938</div>
<div class="c cur" style="left:967px;width:201px;">182 065 467 €</div>
<div class="c cur" style="left:1168px;width:148px;">102 320 792 €</div>
<div class="c cur" style="left:1316px;width:130px;">12 826 962 €</div>
<div class="c cur" style="left:1446px;width:142px;">13 240 301 €</div>
<div class="c r" style="left:1588px;width:180px;">13%</div>
<div class="c" style="left:1768px;width:93px;border-right:none;"></div>
</div>
</div>

<!-- vertical scrollbar -->
<div id="vscroll"><div id="vtrack"></div>
<svg class="abs" style="left:7px;top:5px" width="12" height="10" viewBox="0 0 12 10"><path d="M6 1.500l5 7h-10z" fill="#737373" stroke="#737373" stroke-linejoin="round" stroke-width="1"/></svg>
<div class="abs" style="left:8px;top:21px;width:11px;height:21px;border-radius:5.500px;background:#737373"></div>
<svg class="abs" style="left:7px;top:795px" width="12" height="10" viewBox="0 0 12 10"><path d="M6 8.500l5-7h-10z" fill="#737373" stroke="#737373" stroke-linejoin="round" stroke-width="1"/></svg>
</div>

<!-- bottom bar -->
<div id="bottom">
<div class="pn" style="left:0;width:258px;border-radius:0 7px 0 0"></div><div class="pn" style="left:328px;width:1589px;border-radius:7px 0 0 0"></div>
<svg class="abs" style="left:30px;top:11px" width="10" height="16" viewBox="0 0 10 16" fill="none" stroke="#B0B0B0" stroke-width="1.400"><path d="M8 2l-6 6 6 6"/></svg>
<svg class="abs" style="left:71px;top:11px" width="10" height="16" viewBox="0 0 10 16" fill="none" stroke="#B0B0B0" stroke-width="1.400"><path d="M2 2l6 6-6 6"/></svg>
<span class="s" style="left:152px">Dashboard</span>
<div class="abs" style="left:253px;top:8px;width:1px;height:23px;background:#C9CBCF"></div>
<div class="abs" style="left:260px;top:2px;width:66px;height:29px;border-radius:5px 5px 0 0;background:linear-gradient(#FBFBFB 0%,#F9DCDC 45%,#F49B9B 100%)"></div>
<div class="abs" style="left:270px;top:30px;width:46px;height:1px;background:#1E7145"></div>
<svg class="abs" style="left:278px;top:7px" width="18" height="20" viewBox="0 0 18 20" fill="none" stroke="#333" stroke-width="2"><rect x="2.500" y="8.500" width="13" height="10" rx="1.500"/><path d="M5.500 8.500v-3a3.500 3.500 0 0 1 7 0v3"/><path d="M9 11.500v4" stroke-width="2.200"/></svg>
<span class="s" style="left:299px;top:7px;font-weight:bold;font-size:16px;color:#333">BD</span>
<div class="abs" style="left:332px;top:8px;width:1px;height:23px;background:#C9CBCF"></div>
<span class="s" style="left:352px">Donnée traitée</span>
<div class="abs" style="left:482px;top:8px;width:1px;height:23px;background:#C9CBCF"></div>
<span class="s" style="left:498px">Contacts mails</span>
<div class="abs" style="left:627px;top:8px;width:1px;height:23px;background:#C9CBCF"></div>
<svg class="abs" style="left:679px;top:10px" width="18" height="18" viewBox="0 0 18 18" stroke="#8A8A8A" stroke-width="1.300"><path d="M9 2v14M2 9h14"/></svg>
<svg class="abs" style="left:1153px;top:12px" width="6" height="18" viewBox="0 0 6 18" fill="#444"><rect x="1.500" y="2" width="2.500" height="2.500"/><rect x="1.500" y="7" width="2.500" height="2.500"/><rect x="1.500" y="12" width="2.500" height="2.500"/></svg>
<div class="abs" style="left:1177px;top:9px;width:720px;height:24px;border-radius:11px;background:#F3F3F3"></div>
<svg class="abs" style="left:1181px;top:13px" width="10" height="12" viewBox="0 0 10 12"><path d="M1.500 6l7-5v10z" fill="#737373" stroke="#737373" stroke-linejoin="round"/></svg>
<div class="abs" style="left:1197px;top:14px;width:482px;height:11px;border-radius:5.500px;background:#737373"></div>
<svg class="abs" style="left:1881px;top:13px" width="10" height="12" viewBox="0 0 10 12"><path d="M8.500 6l-7-5v10z" fill="#737373" stroke="#737373" stroke-linejoin="round"/></svg>
</div>

<!-- chart tooltip -->
<div id="tip">Series "Somme de Objectif (€)" Point "oct"<br>Value: 4569418887</div>
</body></html>
